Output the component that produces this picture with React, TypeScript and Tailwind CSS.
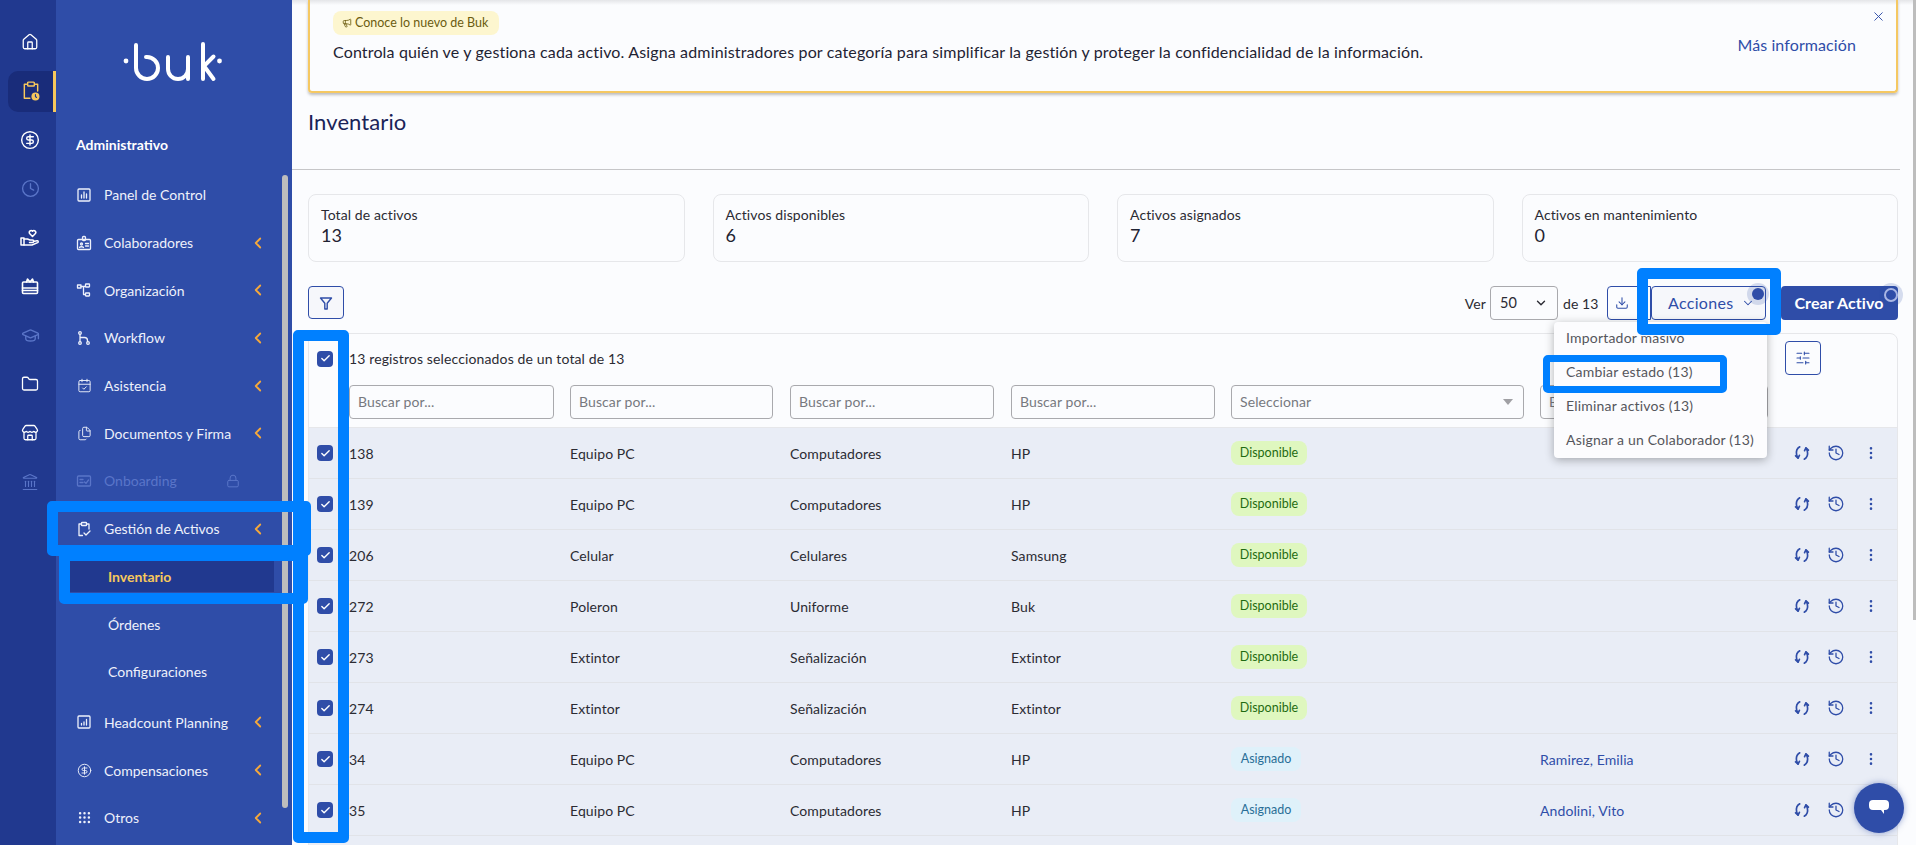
import React from 'react';
import {
  House,
  CircleDollarSign,
  Clock,
  GraduationCap,
  Folder,
  Store,
  Landmark,
  ChevronLeft,
  ChevronDown,
  X,
  Download,
  SlidersHorizontal,
  History,
  EllipsisVertical,
  Lock,
  Check,
  CalendarCheck,
  Files,
  Grip,
  Megaphone,
} from 'lucide-react';

const FONT = "font-['Lato','Noto_Sans',sans-serif]";

// ── Custom line icons (the lucide ones don't match closely enough) ──────────
const Svg: React.FC<{ size?: number; className?: string; children: React.ReactNode }> = ({ size = 16, className, children }) => (
  <svg width={size} height={size} viewBox="0 0 16 16" fill="none" stroke="currentColor" strokeWidth={1.3} strokeLinecap="round" strokeLinejoin="round" className={className}>
    {children}
  </svg>
);

const PanelIcon = () => (
  <Svg><rect x="2" y="2" width="12" height="12" rx="1" /><path d="M5.5 11V8M8 11V5M10.5 11V7" /></Svg>
);
const BadgeIcon = () => (
  <Svg><rect x="1.5" y="4.5" width="13" height="10" rx="1" /><rect x="6.5" y="1.5" width="3" height="4" rx="1" /><circle cx="5.5" cy="9" r="1" /><path d="M3.5 12.5c.4-1 3.6-1 4 0M9.5 8.5h3M9.5 11h3" /></Svg>
);
const OrgIcon = () => (
  <Svg><rect x="1.5" y="3" width="3.5" height="3" /><rect x="9.5" y="2" width="4" height="3" rx=".5" /><rect x="9.5" y="11" width="4" height="3" rx=".5" /><path d="M5 4.5h4.5M7.5 4.5v8h2" /></Svg>
);
const FlowIcon = () => (
  <Svg><circle cx="4" cy="3" r="1.3" /><circle cx="4" cy="13" r="1.3" /><circle cx="12" cy="13" r="1.3" /><path d="M4 4.3v7.4M4 7.5h4.5a3 3 0 0 1 3 3v1" /></Svg>
);
const OnboardIcon = () => (
  <Svg><rect x="1.5" y="3" width="13" height="10" rx="1" /><path d="M4 6.5h3M4 9.5h3M8.5 9l1.5 1.3 2.5-3.3" /></Svg>
);
const AssetIcon = () => (
  <Svg><path d="M5.5 3H3v11.5h3.5M10.5 3H13v5" /><rect x="5.5" y="1.5" width="5" height="3" rx=".6" /><path d="M8 12l2 2 4-4" /></Svg>
);
const HeadcountIcon = () => (
  <Svg><rect x="2" y="2" width="12" height="12" rx="1" /><path d="M5.5 11v-1.5M8 11V8M10.5 11V5.5" /></Svg>
);

const RailClipboard = () => (
  <svg width="20" height="20" viewBox="0 0 16 18" fill="none" stroke="#f7c85c" strokeWidth={1.3} strokeLinecap="round" strokeLinejoin="round">
    <path d="M4 3H2v12.5h5M12 3h2v6" />
    <rect x="5" y="1" width="6" height="3.5" rx=".7" />
    <circle cx="12" cy="14" r="3.6" fill="#f7c85c" stroke="none" />
    <path d="M12 12.2V14l1 .8" stroke="#21398f" strokeWidth={1} />
  </svg>
);
const RailHand = () => (
  <svg width="20" height="20" viewBox="0 0 20 20" fill="none" stroke="currentColor" strokeWidth={1.5} strokeLinecap="round" strokeLinejoin="round">
    <path d="M12.5 8.5 9.8 5.8a1.9 1.9 0 0 1 2.7-2.7 1.9 1.9 0 0 1 2.7 2.7z" />
    <rect x="1" y="10" width="3" height="7" />
    <path d="M4 11h3.5l2.5 1h2.5a1.2 1.2 0 0 1 0 2.6H9.5M13.5 13.5l3.5-.8c1.4-.2 1.6 1.3.6 1.9L12 17H4" />
  </svg>
);
const RailGift = () => (
  <svg width="18" height="18" viewBox="0 0 18 18" fill="none" stroke="currentColor" strokeWidth={1.6} strokeLinecap="round" strokeLinejoin="round">
    <rect x="1.5" y="5" width="15" height="11.5" rx="1" />
    <path d="M1.5 11h15M1.5 13.5h15M9 5 6.5 2 5.5 5M9 5l2.5-3 1 3" />
  </svg>
);
const SyncIcon = () => (
  <svg width="18" height="18" viewBox="0 0 16 16" fill="none" stroke="#2f4da8" strokeWidth={1.5} strokeLinecap="round" strokeLinejoin="round">
    <path d="M6 2.5C3.5 4 2.7 7 3.2 9.5c.2 1 .6 2 1.3 2.8" />
    <path d="M2.3 10.6l2.2 2 1.2-2.5" />
    <path d="M10 13.5c2.5-1.5 3.3-4.5 2.8-7-.2-1-.6-2-1.3-2.8" />
    <path d="M13.7 5.4l-2.2-2-1.2 2.5" />
  </svg>
);
const FunnelIcon = () => (
  <svg width="16" height="16" viewBox="0 0 16 16" fill="none" stroke="currentColor" strokeWidth={1.4} strokeLinejoin="round">
    <path d="M2.5 3h11L9.2 8.2V14H6.8V8.2z" />
  </svg>
);
const BukLogo = () => (
  <svg width="106" height="44" viewBox="120 40 106 44" fill="none" stroke="white" strokeWidth={4} strokeLinecap="round" strokeLinejoin="round">
    <circle cx="126" cy="61" r="2.4" fill="white" stroke="none" />
    <path d="M136 45v23a11 11 0 1 0 11-11h-1" />
    <path d="M168 57v12a9 9 0 0 0 20 0V57v22" />
    <path d="M203 44v35M204 66l9.5-9.5M204 66l9.5 13" />
    <circle cx="219.5" cy="61" r="2.4" fill="white" stroke="none" />
  </svg>
);

// ── Sidebar ─────────────────────────────────────────────────────────────────
const railItems: { icon: React.ReactNode; dim?: boolean; active?: boolean }[] = [
  { icon: <House size={18} strokeWidth={1.7} /> },
  { icon: <RailClipboard />, active: true },
  { icon: <CircleDollarSign size={20} strokeWidth={1.7} /> },
  { icon: <Clock size={19} strokeWidth={1.7} />, dim: true },
  { icon: <RailHand /> },
  { icon: <RailGift /> },
  { icon: <GraduationCap size={19} strokeWidth={1.7} />, dim: true },
  { icon: <Folder size={18} strokeWidth={1.7} /> },
  { icon: <Store size={18} strokeWidth={1.7} /> },
  { icon: <Landmark size={18} strokeWidth={1.5} />, dim: true },
];

type NavItem = { label: string; icon: React.ReactNode; chevron?: boolean; dim?: boolean; lock?: boolean };

const navTop: NavItem[] = [
  { label: 'Panel de Control', icon: <PanelIcon /> },
  { label: 'Colaboradores', icon: <BadgeIcon />, chevron: true },
  { label: 'Organización', icon: <OrgIcon />, chevron: true },
  { label: 'Workflow', icon: <FlowIcon />, chevron: true },
  { label: 'Asistencia', icon: <CalendarCheck size={15} strokeWidth={1.5} />, chevron: true },
  { label: 'Documentos y Firma', icon: <Files size={15} strokeWidth={1.5} />, chevron: true },
  { label: 'Onboarding', icon: <OnboardIcon />, dim: true, lock: true },
  { label: 'Gestión de Activos', icon: <AssetIcon />, chevron: true },
];

const navBottom: NavItem[] = [
  { label: 'Headcount Planning', icon: <HeadcountIcon />, chevron: true },
  { label: 'Compensaciones', icon: <CircleDollarSign size={15} strokeWidth={1.5} />, chevron: true },
  { label: 'Otros', icon: <Grip size={15} strokeWidth={2} />, chevron: true },
];

const NavRow: React.FC<{ item: NavItem }> = ({ item }) => (
  <div className={`h-[47.7px] flex items-center pl-[20px] pr-[25px] text-[14px] ${item.dim ? 'text-[#5a75c8]' : 'text-[#eef1fb]'}`}>
    <span className="w-[16px] flex justify-center shrink-0">{item.icon}</span>
    <span className="ml-[12px] flex-1 whitespace-nowrap">{item.label}</span>
    {item.chevron && <ChevronLeft size={18} strokeWidth={2.4} className="text-[#f5a83a]" />}
    {item.lock && <Lock size={14} strokeWidth={1.7} className="text-[#5a75c8] mr-[27px]" />}
  </div>
);

const Sidebar = () => (
  <aside className="relative w-[292px] shrink-0 flex h-full text-white tracking-normal">
    <div className="w-[56px] shrink-0 bg-[#21398f] flex flex-col items-stretch pt-[18px]">
      {railItems.map((r, i) => (
        <div
          key={i}
          className={`h-[48.8px] flex items-center justify-center pl-[12px] pr-[8px] ${r.dim ? 'text-[#5a75c8]' : 'text-white'}`}
        >
          {r.active ? (
            <div className="-mr-[8px] -ml-[4px] w-[48px] h-[41px] bg-[#192c7a] rounded-l-[10px] border-r-[3px] border-[#f7c85c] flex items-center justify-center">
              {r.icon}
            </div>
          ) : r.icon}
        </div>
      ))}
    </div>
    <div className="flex-1 bg-[#2f4da8] flex flex-col">
      <div className="h-[123.5px] shrink-0 pl-[64px] pt-[40px]">
        <BukLogo />
      </div>
      <div className="h-[41px] shrink-0 pl-[20px] flex items-center font-bold text-[14px] text-white">Administrativo</div>
      <div className="shrink-0 mt-[6.5px]">
        {navTop.map((n) => <NavRow key={n.label} item={n} />)}
        <div className="ml-[14px] mr-[18px] h-[47.7px] flex items-center">
          <div className="w-full h-[32px] bg-[#21398f] pl-[38px] flex items-center font-bold text-[14px] text-[#f7c85c]">Inventario</div>
        </div>
        <div className="h-[47.7px] flex items-center pl-[52px] text-[14px] text-[#eef1fb]">Órdenes</div>
        <div className="h-[47.7px] flex items-center pl-[52px] text-[14px] text-[#eef1fb]">Configuraciones</div>
        <div className="h-[3px]" />
        {navBottom.map((n) => <NavRow key={n.label} item={n} />)}
      </div>
    </div>
    {/* sidebar scrollbar */}
    <div className="absolute left-[282px] top-[175px] w-[6px] h-[633px] rounded-full bg-[#bdbdbd]" />
  </aside>
);

// ── Table data ──────────────────────────────────────────────────────────────
const rows = [
  ['138', 'Equipo PC', 'Computadores', 'HP', 'Disponible', ''],
  ['139', 'Equipo PC', 'Computadores', 'HP', 'Disponible', ''],
  ['206', 'Celular', 'Celulares', 'Samsung', 'Disponible', ''],
  ['272', 'Poleron', 'Uniforme', 'Buk', 'Disponible', ''],
  ['273', 'Extintor', 'Señalización', 'Extintor', 'Disponible', ''],
  ['274', 'Extintor', 'Señalización', 'Extintor', 'Disponible', ''],
  ['34', 'Equipo PC', 'Computadores', 'HP', 'Asignado', 'Ramirez, Emilia'],
  ['35', 'Equipo PC', 'Computadores', 'HP', 'Asignado', 'Andolini, Vito'],
];

const GRID = 'grid grid-cols-[40px_221px_220px_221px_220px_309px_1fr]';

const CheckBox = () => (
  <span className="ml-[8px] w-[16px] h-[16px] rounded-[4px] bg-[#2f4da8] flex items-center justify-center">
    <Check size={11} strokeWidth={3} className="text-white" />
  </span>
);

const StatusChip: React.FC<{ value: string }> = ({ value }) =>
  value === 'Disponible' ? (
    <span className="inline-flex items-center justify-center h-[24px] w-[76px] rounded-[8px] bg-[#dff7bf] text-[#1f6b12] text-[12.5px] tracking-normal">{value}</span>
  ) : (
    <span className="inline-flex items-center justify-center h-[24px] w-[70px] rounded-[8px] bg-[#dff1fa] text-[#2a6f97] text-[12.5px] tracking-normal">{value}</span>
  );

const SearchInput: React.FC<{ className?: string; label?: string }> = ({ className = '', label = 'Buscar por...' }) => (
  <div className={`h-[34px] rounded-[4px] border border-[#a9a9ad] bg-[#fbfcfe] pl-[8px] pb-[1px] flex items-center text-[14px] text-[#77797f] overflow-hidden ${className}`}>
    {label}
  </div>
);

const stats = [
  ['Total de activos', '13'],
  ['Activos disponibles', '6'],
  ['Activos asignados', '7'],
  ['Activos en mantenimiento', '0'],
];

const Frame: React.FC<{ className: string }> = ({ className }) => (
  <div className={`absolute border-[#0080ff] rounded-[5px] pointer-events-none ${className}`} />
);

export default function App() {
  return (
    <div className={`relative w-[1916px] h-[845px] overflow-hidden flex bg-[#fbfcfe] text-[#2b2b33] tracking-[0.1px] ${FONT}`}>
      <Sidebar />

      <main className="flex-1 min-w-0 pl-[16px] pr-[18px] relative">
        <div className="absolute inset-x-0 top-0 h-[5px] bg-gradient-to-b from-[#e4e5e8] to-transparent" />

        {/* Announcement */}
        <div className="relative h-[93px] rounded-b-[4px] border-x-2 border-b-2 border-[#f5c862] shadow-[0_2px_3px_rgba(0,0,0,0.25)] pl-[23px] pr-[40px] pt-[10px]">
          <span className="inline-flex items-center gap-[3px] h-[24px] w-[166px] pl-[9px] rounded-[8px] bg-[#fdf6cf] text-[#6b5c10] text-[12.5px] tracking-normal whitespace-nowrap">
            <Megaphone size={10} strokeWidth={2} />
            Conoce lo nuevo de Buk
          </span>
          <div className="flex items-center justify-between">
            <p className="text-[16px] tracking-[0.15px] mt-[5px] text-[#1f2333] whitespace-nowrap">Controla quién ve y gestiona cada activo. Asigna administradores por categoría para simplificar la gestión y proteger la confidencialidad de la información.</p>
            <a className="text-[16px] text-[#2f4da8] -mt-[10px] whitespace-nowrap">Más información</a>
          </div>
          <X size={15} strokeWidth={1.5} className="absolute right-[10px] top-[9px] text-[#2f4da8]" />
        </div>

        <h1 className="text-[22px] text-[#1a2358] h-[76px] pt-[15px] leading-[28px]">Inventario</h1>
        <div className="-ml-[16px] -mr-[2px] border-t border-[#c6c6c8]" />

        {/* Stats */}
        <div className="grid grid-cols-4 gap-[28px] mt-[24px]">
          {stats.map(([label, value]) => (
            <div key={label} className="h-[68px] rounded-[8px] border border-[#e6e7ea] pl-[12px] pt-[11px]">
              <div className="text-[14px] leading-[18px] text-[#2b2b33]">{label}</div>
              <div className="text-[18px] leading-[22px] text-[#1f2333]">{value}</div>
            </div>
          ))}
        </div>

        {/* Toolbar */}
        <div className="flex items-center justify-between mt-[24px] h-[34px]">
          <button className="w-[36px] h-[33px] -mt-[1px] rounded-[4px] border border-[#2f4da8] bg-[#f6f7fb] text-[#2f4da8] flex items-center justify-center">
            <FunnelIcon />
          </button>
          <div className="flex items-center text-[14px]">
            <span>Ver</span>
            <div className="ml-[4px] w-[68px] h-[34px] rounded-[4px] border border-[#a9a9ad] flex items-center justify-between px-[9px] text-[14.5px]">
              <span>50</span>
              <ChevronDown size={14} strokeWidth={2.4} className="text-[#2b2b33]" />
            </div>
            <span className="ml-[5px] w-[39px]">de 13</span>
            <button className="ml-[5px] w-[44px] h-[34px] rounded-l-[4px] border border-[#2f4da8] text-[#2f4da8] flex items-center justify-center">
              <Download size={14} strokeWidth={1.8} className="-ml-[14px]" />
            </button>
            <button className="relative w-[115px] h-[34px] rounded-[4px] border border-[#2f4da8] text-[#2f4da8] bg-[#f6f7fb] text-[16px] tracking-[0.3px] flex items-center pl-[16px] gap-[8px]">
              Acciones
              <ChevronDown size={14} strokeWidth={1.8} />
              <span className="absolute left-[100px] top-[1px] w-[12px] h-[12px] rounded-full bg-[#2f4da8] shadow-[0_0_0_5px_rgba(47,77,168,0.18)]" />
            </button>
            <button className="relative ml-[15px] w-[117px] h-[34px] rounded-[4px] bg-[#2f4da8] text-white font-bold text-[16px] tracking-[0.1px] flex items-center justify-center pr-[1px]">
              Crear Activo
              <span className="absolute left-[103px] top-[2px] w-[14px] h-[14px] rounded-full border-2 border-[#a9b6e4] shadow-[0_0_0_5px_rgba(47,77,168,0.18)]" />
            </button>
          </div>
        </div>

        {/* Table */}
        <div className="mt-[13px] rounded-t-[8px] border border-[#e6e7ea] relative">
          <div className="h-[94px] border-b border-[#e6e7ea]">
            <div className="flex items-center h-[49px]">
              <div className="w-[40px] flex"><CheckBox /></div>
              <span className="text-[14px] tracking-[0.13px]">13 registros seleccionados de un total de 13</span>
            </div>
            <div className={`${GRID} mt-[2px]`}>
              <div />
              <SearchInput className="w-[205px]" />
              <SearchInput className="w-[203px]" />
              <SearchInput className="w-[204px]" />
              <SearchInput className="w-[204px]" />
              <div className="w-[293px] h-[34px] rounded-[4px] border border-[#a9a9ad] pl-[8px] pr-[10px] pb-[1px] flex items-center justify-between text-[14px] text-[#77797f]">
                Seleccionar
                <span className="w-0 h-0 border-x-[5px] border-x-transparent border-t-[6px] border-t-[#a0a0a4]" />
              </div>
              <SearchInput className="w-[228px]" label="Buscar por..." />
            </div>
          </div>
          <button className="absolute left-[1476px] top-[7px] w-[36px] h-[34px] rounded-[4px] border border-[#2f4da8] text-[#2f4da8] flex items-center justify-center">
            <SlidersHorizontal size={16} strokeWidth={1.6} />
          </button>

          {rows.map((r) => (
            <div key={r[0]} className={`${GRID} h-[51px] items-center bg-[#e9edf6] border-b border-[#e1e3e8] text-[14px]`}>
              <div className="flex"><CheckBox /></div>
              <span>{r[0]}</span>
              <span>{r[1]}</span>
              <span>{r[2]}</span>
              <span>{r[3]}</span>
              <span><StatusChip value={r[4]} /></span>
              <div className="flex items-center justify-between">
                <span className="text-[#2f4da8]">{r[5]}</span>
                <div className="flex items-center gap-[16px] pr-[18px] text-[#2f4da8]">
                  <SyncIcon />
                  <History size={18} strokeWidth={1.7} />
                  <EllipsisVertical size={16} strokeWidth={1.9} className="ml-[2px]" />
                </div>
              </div>
            </div>
          ))}
          {/* next row runs past the bottom edge of the window */}
          <div className="h-[51px] bg-[#e9edf6]" />
        </div>

        {/* Scrollbar of the page */}
        <div className="absolute right-0 top-0 w-[3px] h-[620px] bg-[#bdbdbd]" />
      </main>

      {/* Acciones menu */}
      <div className="absolute left-[1554px] top-[322px] w-[213px] h-[136px] rounded-[4px] bg-[#fcfcfe] shadow-[0_2px_10px_rgba(0,0,0,0.3)] text-[14px] tracking-[0.2px] text-[#55565c]">
        <div className="-mt-[1.5px] flex flex-col">
          {['Importador masivo', 'Cambiar estado (13)', 'Eliminar activos (13)', 'Asignar a un Colaborador (13)'].map((t) => (
            <div key={t} className="h-[34px] flex items-center pl-[12px] whitespace-nowrap">{t}</div>
          ))}
        </div>
      </div>

      {/* Chat bubble */}
      <div className="absolute left-[1854px] top-[783px] w-[50px] h-[50px] rounded-full bg-[#2f4da8] shadow-[0_0_6px_rgba(47,77,168,0.5)] flex items-center justify-center">
        <svg width="22" height="20" viewBox="0 0 22 20"><path d="M5 2h12a4 4 0 0 1 4 4v2a4 4 0 0 1-4 4h-1v4l-3-4H5a4 4 0 0 1-4-4V6a4 4 0 0 1 4-4z" fill="white" /></svg>
      </div>

      {/* Highlight frames drawn over the screenshot */}
      <Frame className="left-[47px] top-[501px] w-[264px] h-[55px] border-[11px]" />
      <Frame className="left-[59px] top-[550px] w-[249px] h-[54px] border-[11px]" />
      <Frame className="left-[293px] top-[330px] w-[56px] h-[513px] border-[11px]" />
      <Frame className="left-[1637px] top-[268px] w-[144px] h-[67px] border-[11px]" />
      <Frame className="left-[1543px] top-[355px] w-[184px] h-[38px] border-[7px]" />
    </div>
  );
}
